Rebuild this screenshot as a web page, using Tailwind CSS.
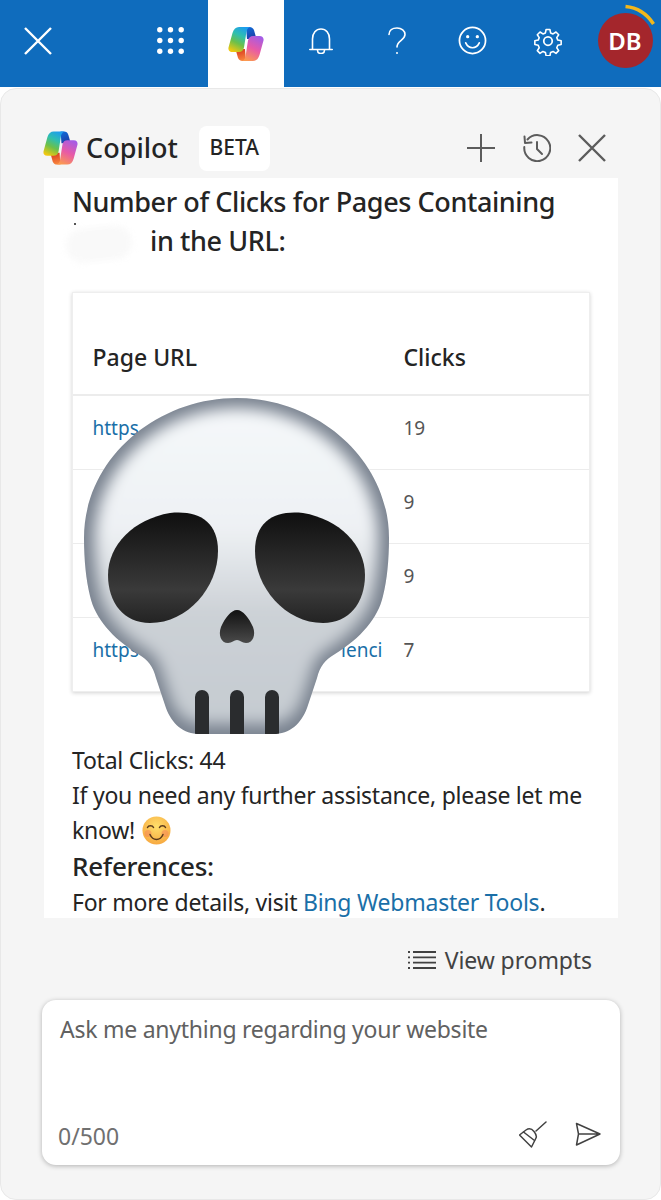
<!DOCTYPE html>
<html lang="en">
<head>
    <meta charset="UTF-8">
    <title>Copilot</title>
    <script src="https://cdn.jsdelivr.net/npm/@tailwindcss/browser@4"></script>
</head>
<body class="bg-white">
<div class="relative w-[661px] h-[1200px] overflow-hidden font-['Noto_Sans',sans-serif] text-[#242424]">

    <!-- shared copilot logo -->
    <svg width="0" height="0" class="absolute">
        <defs>
            <linearGradient id="blade-a" x1="0.7" y1="0" x2="0.25" y2="1">
                <stop offset="0" stop-color="#1c9cf0"/>
                <stop offset="0.35" stop-color="#2fbfae"/>
                <stop offset="0.65" stop-color="#6cc04a"/>
                <stop offset="1" stop-color="#f2c80f"/>
            </linearGradient>
            <linearGradient id="blade-b" x1="0.75" y1="0" x2="0.3" y2="1">
                <stop offset="0" stop-color="#a45ce6"/>
                <stop offset="0.5" stop-color="#e85aa6"/>
                <stop offset="1" stop-color="#fb9a50"/>
            </linearGradient>
            <linearGradient id="ribbon-a" x1="0" y1="0" x2="0.4" y2="1">
                <stop offset="0" stop-color="#0f6fdc"/>
                <stop offset="1" stop-color="#1c3fa8"/>
            </linearGradient>
            <linearGradient id="ribbon-b" x1="0.6" y1="1" x2="0.4" y2="0">
                <stop offset="0" stop-color="#f9873e"/>
                <stop offset="1" stop-color="#d8391f"/>
            </linearGradient>
            <symbol id="copilot" viewBox="0 0 36 36">
                <path d="M18 1h3.500c2.300 0 3.900 1.200 4.600 3.500L28.500 13H19z" fill="url(#ribbon-a)"/>
                <path d="M18 35h-3.500c-2.300 0-3.900-1.200-4.600-3.500L7.500 23H17z" fill="url(#ribbon-b)"/>
                <path d="M11 1h12c-2.500 0-4 2-4.500 4.500L16 21.500C15.400 24.500 13.500 26 11 26H4.500C1.500 26 0 24 .5 21.500L4.500 7C5.600 3 8 1 11 1z" fill="url(#blade-a)"/>
                <path d="M25 35H13c2.500 0 4-2 4.500-4.500L20 14.500C20.600 11.500 22.500 10 25 10h6.500c3 0 4.500 2 4 4.500L31.500 29c-1.100 4-3.500 6-6.500 6z" fill="url(#blade-b)"/>
            </symbol>
        </defs>
    </svg>

    <!-- top bar -->
    <div class="flex h-[87px] bg-[#0f6cbd] text-white">
        <div class="w-[76px] mr-[56.5px] pb-[6px] flex items-center justify-center">
            <svg width="28" height="28" viewBox="0 0 28 28" fill="none" stroke="currentColor" stroke-width="2.400"><path d="M1 1l26 26M27 1L1 27"/></svg>
        </div>
        <div class="w-[75.5px] pb-[6px] flex items-center justify-center">
            <svg width="27" height="27" viewBox="0 0 27 27" fill="currentColor">
                <circle cx="2.800" cy="2.800" r="2.700"/><circle cx="13.500" cy="2.800" r="2.700"/><circle cx="24.200" cy="2.800" r="2.700"/>
                <circle cx="2.800" cy="13.500" r="2.700"/><circle cx="13.500" cy="13.500" r="2.700"/><circle cx="24.200" cy="13.500" r="2.700"/>
                <circle cx="2.800" cy="24.200" r="2.700"/><circle cx="13.500" cy="24.200" r="2.700"/><circle cx="24.200" cy="24.200" r="2.700"/>
            </svg>
        </div>
        <div class="w-[75.5px] h-[88px] bg-white flex items-center justify-center">
            <svg width="36" height="36"><use href="#copilot"/></svg>
        </div>
        <div class="w-[75.5px] pb-[6px] flex items-center justify-center">
            <svg width="24" height="26" viewBox="0 0 24 26" fill="none" stroke="currentColor" stroke-width="1.600" stroke-linecap="round"><path d="M3.500 21V11C3.500 5 7 1 12 1s8.500 4 8.500 10v10"/><path d="M.8 21.500h22.400"/><path d="M8.500 22c0 2.500 1.500 3.500 3.500 3.500s3.500-1 3.500-3.500"/></svg>
        </div>
        <div class="w-[75.5px] pb-[6px] flex items-center justify-center">
            <svg width="18" height="28" viewBox="0 0 18 28" fill="none" stroke="currentColor" stroke-width="1.600" stroke-linecap="round"><path d="M1 7.500C1 3.500 4.400 1 9 1s8 2.700 8 6.500c0 5.800-8 6-8 12.500"/><circle cx="9" cy="26" r="1" fill="currentColor" stroke="none"/></svg>
        </div>
        <div class="w-[75.5px] pb-[6px] pl-[1px] flex items-center justify-center">
            <svg width="29" height="29" viewBox="0 0 30 30" fill="none" stroke="currentColor" stroke-width="1.800" stroke-linecap="round"><circle cx="15" cy="15" r="13.500"/><path d="M8 17.500c1.500 3.300 4 5 7 5s5.500-1.700 7-5"/><circle cx="10" cy="11" r="1.700" fill="currentColor" stroke="none"/><circle cx="20" cy="11" r="1.700" fill="currentColor" stroke="none"/></svg>
        </div>
        <div class="w-[75.5px] pb-[6px] flex items-center justify-center">
            <svg width="30" height="30" viewBox="0 0 24 24" fill="none" stroke="currentColor" stroke-width="1.400" stroke-linejoin="round"><circle cx="12" cy="12" r="3.400"/><path d="M10.300 1.800h3.400l.6 3 2.200.9 2.600-1.700 2.400 2.400-1.700 2.600.9 2.200 3 .6v3.400l-3 .6-.9 2.200 1.700 2.600-2.400 2.400-2.600-1.700-2.200.9-.6 3h-3.400l-.6-3-2.200-.9-2.600 1.700-2.400-2.400 1.700-2.600-.9-2.200-3-.6v-3.400l3-.6.900-2.200L2.500 6.400l2.400-2.400 2.600 1.700 2.200-.9z" transform="translate(1.200 1.200) scale(.9)"/></svg>
        </div>
        <div class="relative w-[75.5px]">
            <div class="absolute left-[12px] top-[13px] w-[55px] h-[55px] rounded-full bg-[#a4262c] flex items-center justify-center text-[24px] font-semibold leading-none">DB</div>
            <svg class="absolute left-0 top-0" width="76" height="40" fill="none" stroke="#f2b71b" stroke-width="3.500"><path d="M39.500 6.500C51 7.500 61 14 67.500 24"/></svg>
        </div>
    </div>

    <!-- panel -->
    <div class="h-[1112px] mt-px flex flex-col bg-[#f5f5f5] rounded-[16px] border border-[#e8e8e8]">
        <div class="h-[89px] flex items-center pl-[42px] pr-[54px] shrink-0">
            <svg class="mt-[29px]" width="35" height="36"><use href="#copilot"/></svg>
            <span class="ml-[8px] mt-[27px] text-[27px] font-medium leading-none">Copilot</span>
            <span class="ml-[21px] mt-[29px] w-[71px] h-[45px] rounded-[8px] bg-white flex items-center justify-center text-[21px] font-medium">BETA</span>
            <div class="ml-auto mt-[29px] flex items-center gap-[27.5px] text-[#5c5c5c]">
                <svg width="28" height="28" viewBox="0 0 28 28" fill="none" stroke="currentColor" stroke-width="2"><path d="M14 0v28M0 14h28"/></svg>
                <svg width="28" height="28" viewBox="0 0 28 28" fill="none" stroke="currentColor" stroke-width="2" stroke-linecap="round" stroke-linejoin="round"><path d="M4.500 5.500A13 13 0 1 1 1.300 13"/><path d="M1.500 2.500l.5 6.500 6.500-.5"/><path d="M14 8v7l5 5"/></svg>
                <svg width="28" height="28" viewBox="0 0 28 28" fill="none" stroke="currentColor" stroke-width="2.400"><path d="M1 1l26 26M27 1L1 27"/></svg>
            </div>
        </div>

        <div class="ml-[43px] w-[574px] h-[740px] shrink-0 overflow-hidden bg-white pl-[28px] pr-[28px] text-[23px] leading-[35px] tracking-[-0.25px]">
            <h2 class="mt-[4px] text-[27px] leading-[39px] font-medium tracking-[-0.4px]">
                Number of Clicks for Pages Containing
                <span class="relative inline-block w-[78px] h-[30px] align-middle">
                    <span class="absolute left-[-6px] top-[-2px] w-[66px] h-[34px] rounded-full bg-[#f9f9f9] blur-[3px] -rotate-6"></span>
                    <span class="absolute left-[2px] top-[-6px] w-[2px] h-[2px] bg-[#555]"></span>
                </span>in the URL:
            </h2>

            <div class="mt-[32px] w-[518px] bg-white border border-[#eeeeee] shadow-[0_1px_4px_rgba(0,0,0,0.18)] pt-[29px] tracking-normal">
                <div class="h-[74px] grid grid-cols-[311px_1fr] items-center pl-[19.5px] pb-[2px] border-b-2 border-[#ececec] font-medium text-[23px] leading-none">
                    <span>Page URL</span><span>Clicks</span>
                </div>
                <div class="h-[74px] grid grid-cols-[311px_1fr] items-center pl-[19.5px] pb-[8px] border-b border-[#ececec] text-[19px]">
                    <a class="text-[#1a6fa8]">https</a><span class="text-[#555]">19</span>
                </div>
                <div class="h-[74px] grid grid-cols-[311px_1fr] items-center pl-[19.5px] pb-[8px] border-b border-[#ececec] text-[19px]">
                    <a class="text-[#1a6fa8]">https</a><span class="text-[#555]">9</span>
                </div>
                <div class="h-[74px] grid grid-cols-[311px_1fr] items-center pl-[19.5px] pb-[8px] border-b border-[#ececec] text-[19px]">
                    <a class="text-[#1a6fa8]">https</a><span class="text-[#555]">9</span>
                </div>
                <div class="h-[73px] grid grid-cols-[311px_1fr] items-center pl-[19.5px] pb-[8px] text-[19px]">
                    <a class="flex justify-between pr-[21px] text-[#1a6fa8]"><span>https</span><span>lenci</span></a><span class="text-[#555]">7</span>
                </div>
            </div>

            <p class="mt-[51px]">Total Clicks: 44</p>
            <p>If you need any further assistance, please let me know!
                <svg class="inline-block align-[-6px] ml-[1px]" width="29" height="29" viewBox="0 0 29 29">
                    <defs><radialGradient id="smile-fill" cx="0.5" cy="0.35" r="0.75"><stop offset="0" stop-color="#ffdf6b"/><stop offset="1" stop-color="#f6a13a"/></radialGradient></defs>
                    <circle cx="14.500" cy="14.500" r="14" fill="url(#smile-fill)"/>
                    <circle cx="6" cy="17.500" r="3.500" fill="#f47c5c" opacity=".45"/><circle cx="23" cy="17.500" r="3.500" fill="#f47c5c" opacity=".45"/>
                    <path d="M5.500 11.500c1-2.500 5-2.500 6 0M17.500 11.500c1-2.500 5-2.500 6 0" fill="none" stroke="#5b3a1c" stroke-width="1.500" stroke-linecap="round"/>
                    <path d="M8 18.500c1.500 3.500 3.800 5 6.500 5s5-1.500 6.500-5" fill="none" stroke="#5b3a1c" stroke-width="1.500" stroke-linecap="round"/>
                </svg>
            </p>
            <p class="mt-px text-[26px] font-medium">References:</p>
            <p class="mt-px">For more details, visit <a class="text-[#1a6fa8]">Bing Webmaster Tools</a>.</p>
        </div>

        <div class="mt-[25px] mr-[68px] flex items-center justify-end text-[#424242]">
            <svg width="28" height="20" viewBox="0 0 28 20" stroke="currentColor" stroke-width="1.800" fill="none"><path d="M5 2h23M5 7.300h23M5 12.600h23M5 18h23"/><path d="M0 2h2M0 7.300h2M0 12.600h2M0 18h2"/></svg>
            <span class="ml-[9px] text-[23px] leading-[34px] tracking-[-0.1px]">View prompts</span>
        </div>

        <div class="relative mt-[23px] ml-[41px] w-[578px] h-[165px] rounded-[14px] bg-white shadow-[0_1px_5px_rgba(0,0,0,0.28)] text-[#616161]">
            <div class="pl-[18px] pt-[12px] text-[23px] leading-[34px] tracking-[-0.25px]">Ask me anything regarding your website</div>
            <div class="absolute left-[16px] right-[19px] bottom-[12px] flex items-center">
                <span class="text-[23px] leading-[34px] text-[#707070]">0/500</span>
                <svg class="ml-auto mb-[4px]" width="28" height="28" viewBox="0 0 28 28" fill="none" stroke="#424242" stroke-width="1.500" stroke-linejoin="round" stroke-linecap="round"><path d="M27 2l-10 9"/><path d="M.5 15L7 10c3-2 6-1 8 1.500s3 4.500 2 6.500l-4.500 9z"/><path d="M4.500 12l11 8.500"/></svg>
                <svg class="ml-[28px] mb-[4px]" width="26" height="24" viewBox="0 0 26 24" fill="none" stroke="#424242" stroke-width="1.500" stroke-linejoin="round"><path d="M1.500 1.500L25 12 1.500 23l2-11zM3.500 12H25"/></svg>
            </div>
        </div>
    </div>

    <!-- skull sticker, over the table -->
    <svg class="absolute left-[60px] top-[380px]" width="350" height="370" viewBox="0 0 350 370">
        <defs>
            <path id="skull-outline" d="M177 18C95 18 24 80 24 158c0 22 2 42 6 58 5 22 22 42 48 58 10 6 15 12 18 24l10 30c6 16 17 26 34 26h73c17 0 28-10 34-26l10-30c3-12 8-18 18-24 26-16 43-36 48-58 4-16 6-36 6-58C329 80 258 18 177 18z"/>
            <clipPath id="skull-clip"><use href="#skull-outline"/></clipPath>
            <linearGradient id="bone" x1="0" y1="0" x2="0" y2="1">
                <stop offset="0" stop-color="#f5f8fa"/>
                <stop offset="0.38" stop-color="#eef1f4"/>
                <stop offset="0.65" stop-color="#ccd1d6"/>
                <stop offset="1" stop-color="#c5cbd1"/>
            </linearGradient>
            <linearGradient id="socket" x1="0" y1="0" x2="0" y2="1">
                <stop offset="0" stop-color="#0f0f0f"/>
                <stop offset="0.7" stop-color="#3a3a3a"/>
                <stop offset="1" stop-color="#232323"/>
            </linearGradient>
            <linearGradient id="nose" x1="0" y1="0" x2="0" y2="1">
                <stop offset="0" stop-color="#111"/>
                <stop offset="1" stop-color="#4a4a4a"/>
            </linearGradient>
            <filter id="soft" x="-20%" y="-20%" width="140%" height="140%"><feGaussianBlur stdDeviation="8"/></filter>
        </defs>
        <g clip-path="url(#skull-clip)">
            <rect width="350" height="370" fill="#79828f"/>
            <use href="#skull-outline" fill="url(#bone)" filter="url(#soft)" transform="translate(176.500 186) scale(.93 .94) translate(-176.500 -186)"/>
        </g>
        <path d="M110 133c28-3 48 8 48 38 0 36-30 72-68 72-26 0-42-20-42-48 0-30 26-56 62-62z" fill="url(#socket)"/>
        <path d="M243 133c-28-3-48 8-48 38 0 36 30 72 68 72 26 0 42-20 42-48 0-30-26-56-62-62z" fill="url(#socket)"/>
        <path d="M177 230c6 0 12 8 16 17 3 8 0 16-7 16-4 0-6-3-9-3s-5 3-9 3c-7 0-10-8-7-16 4-9 10-17 16-17z" fill="url(#nose)"/>
        <g clip-path="url(#skull-clip)" fill="#2a2c2e">
            <path d="M135 317a7 7 0 0 1 14 0v45h-14z"/>
            <path d="M170 317a7 7 0 0 1 14 0v45h-14z"/>
            <path d="M205 317a7 7 0 0 1 14 0v45h-14z"/>
        </g>
    </svg>
</div>
</body>
</html>
